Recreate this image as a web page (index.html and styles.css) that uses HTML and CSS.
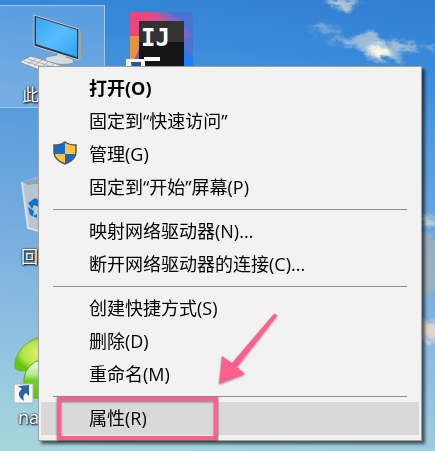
FILE: index.html
```html
<!DOCTYPE html>
<html lang="zh-CN">
<head>
<meta charset="utf-8">
<meta name="viewport" content="width=device-width, initial-scale=1">
<title>桌面</title>
<link rel="stylesheet" href="styles.css">
</head>
<body>
<main class="desktop">
  <svg class="sky" viewBox="0 0 435 451" preserveAspectRatio="none" aria-hidden="true">
    <defs>
      <filter id="cloud" x="-20%" y="-20%" width="140%" height="140%">
        <feGaussianBlur stdDeviation="2" result="soft"/>
        <feTurbulence type="fractalNoise" baseFrequency="0.09 0.16" numOctaves="4" seed="8" result="n"/>
        <feDisplacementMap in="soft" in2="n" scale="14" xChannelSelector="R" yChannelSelector="G"/>
        <feGaussianBlur stdDeviation="0.6"/>
      </filter>
    </defs>
    <g filter="url(#cloud)" fill="#c8d3d8">
      <path d="M325 0L343 11L350 5L362 1L370 9L361 0Z" opacity=".9"/>
      <path d="M308 29L325 20L330 28L343 31L336 35L320 32Z" opacity=".45"/>
      <path d="M325 41L350 38L371 32L386 42L412 44L420 51L397 51L404 66L388 58L372 63L360 47L343 43Z" opacity=".7"/>
      <path d="M366 50L378 44L392 51L380 60Z" fill="#fff7e4"/>
      <path d="M424 44L436 47V52L426 50Z" opacity=".5"/>
      <path d="M416 214L440 221V228L416 222Z"/>
      <path d="M416 230L440 240V290L416 300Z" fill="#9eb2b9" opacity=".85"/>
      <path d="M416 318L440 324V334L432 344L416 336Z" fill="#e4d9d0" opacity=".9"/>
    </g>
  </svg>

  <section class="shortcut computer">
    <svg viewBox="0 0 104 75" width="104" height="75" aria-hidden="true">
      <defs><linearGradient id="screen" x2="1" y2="1"><stop stop-color="#35a5f5"/><stop offset=".5" stop-color="#58bcff"/><stop offset="1" stop-color="#2fa5f8"/></linearGradient></defs>
      <path d="M58 45L66 47L66 51Q76 53 73 57Q66 60 50 57Q43 55 46 51L57 49Z" fill="#d3dbdf" stroke="#87939c"/>
      <path d="M34 9L79 23V54L34 40Z" fill="#333b42" stroke="#c1c9ce"/>
      <path d="M36 11L77 24V51L36 38Z" fill="url(#screen)"/>
      <path d="M79 24L81 25V53L78 54Z" fill="#9ca5aa"/>
      <path d="M19 56L31 50L66 61L55 70Z" fill="#e5e8e9" stroke="#8d979e"/>
      <path d="M24 55L59 66M28 53L62 64M28 58L36 53M34 60L42 54M40 62L48 56M46 64L54 58" stroke="#a9b1b6" fill="none"/>
    </svg>
    <span>此</span>
  </section>

  <section class="shortcut ide">
    <svg viewBox="0 0 68 64" width="68" height="64">
      <path d="M4 0H67V64H4Z" fill="#4d73d2"/>
      <path d="M4 0H34L45 15L13 34L4 28Z" fill="#e9467c"/>
      <path d="M25 0H35L45 9L29 11Z" fill="#cd528f"/>
      <path d="M31 0H41L55 9H42Z" fill="#8c66bd"/>
      <path d="M4 24H13V40L9 50H4Z" fill="#e3943d"/>
      <path d="M7 50L13 37V64H4Z" fill="#92609c"/>
      <path d="M56 14L67 23L58 28Z" fill="#7667ca"/>
      <path d="M57 38L67 47V64H57Z" fill="#1b80f2"/>
      <path d="M13 9H58V64H13Z" fill="#151515"/>
      <path d="M13 9H58V30H13Z" fill="#333"/>
      <text class="ide-letters" x="15" y="34">IJ</text>
      <path d="M18 45H34V49H18Z" fill="#fff"/>
      <path d="M0 47H19V64H0Z" fill="#f4f6f8"/>
      <path d="M5 50H15V60L11 57L6 61Z" fill="#255897"/>
    </svg>
  </section>

  <section class="shortcut bin">
    <svg viewBox="0 0 60 60" width="60" height="60" aria-hidden="true">
      <path d="M1 7L28 0H52L49 55L28 58L7 53Z" fill="#b6c8d5"/>
      <path d="M1 7L20 1V53L7 53Z" fill="#b8c6cf"/>
      <path d="M1 7L28 0V7L7 10Z" fill="#8aa5b8"/>
      <path d="M1 7L7 53L28 59" stroke="#d6e0e5" fill="none" stroke-width="2"/>
      <path d="M7 28L14 23L21 27L18 32L13 30L11 34ZM7 32L13 36L12 41L16 39V43L9 40ZM18 36L25 34V41L17 42Z" fill="#1673cb"/>
    </svg>
    <span>回</span>
  </section>

  <section class="shortcut green">
    <svg viewBox="0 0 60 70" width="60" height="70" aria-hidden="true">
      <defs><radialGradient id="leaf"><stop stop-color="#e9f17a"/><stop offset=".7" stop-color="#b8e548"/><stop offset="1" stop-color="#63c414"/></radialGradient><linearGradient id="leaf2" x2="0" y2="1"><stop stop-color="#fff"/><stop offset=".4" stop-color="#b4e68f"/><stop offset=".55" stop-color="#6fd31c"/><stop offset="1" stop-color="#62c600"/></linearGradient></defs>
      <path d="M1 33C-1 18 14 4 29 1L55 2V35L8 36Q3 36 1 33Z" fill="url(#leaf)" stroke="#68bd12"/>
      <path d="M10 63V43Q12 29 28 24H55V63Z" fill="url(#leaf2)" stroke="#51ad10"/>
      <path d="M0 49H19V68H0Z" fill="#f5f7f8" stroke="#a7b4b8"/>
      <path d="M4 51L15 50V61L12 58Q8 60 10 66Q4 62 5 58Q6 55 8 54Z" fill="#2b64a6"/>
    </svg>
    <span>na</span>
  </section>

  <nav class="context-menu" aria-label="快捷菜单">
    <button class="default">打开(O)</button>
    <button>固定到“快速访问”</button>
    <button>
      <svg class="shield" viewBox="0 0 24 24" width="24" height="24" aria-hidden="true">
        <path d="M12 1Q8 4 1 4V11Q1 19 12 23Z" fill="#1469c9"/>
        <path d="M12 1Q16 4 23 4V11Q23 19 12 23Z" fill="#ffc23e"/>
        <path d="M1 13H12V23Q4 20 1 13Z" fill="#ffc23e"/>
        <path d="M12 13H23Q20 20 12 23Z" fill="#1469c9"/>
        <path d="M12 1Q16 4 23 4V11Q23 19 12 23Q1 19 1 11V4Q8 4 12 1Z" fill="none" stroke="#505760" stroke-width="1.5"/>
      </svg>
      管理(G)</button>
    <button>固定到“开始”屏幕(P)</button>
    <hr>
    <button>映射网络驱动器(N)...</button>
    <button>断开网络驱动器的连接(C)...</button>
    <hr>
    <button>创建快捷方式(S)</button>
    <button>删除(D)</button>
    <button>重命名(M)</button>
    <hr>
    <button class="selected">属性(R)</button>
    <span class="marker"></span>
    <svg class="arrow" viewBox="0 0 62 80" width="62" height="80" aria-hidden="true">
      <path d="M57 4Q59 1 61 5L21 56L29 63L3 73L6 45L16 52Z" fill="#ff6090"/>
    </svg>
  </nav>
</main>
</body>
</html>
```

FILE: styles.css
```css
* {
  box-sizing: border-box;
}

body {
  margin: 0;
  font-family: "Open Sans", "Noto Sans CJK SC", sans-serif;
}

.desktop {
  position: relative;
  min-height: 100vh;
  overflow: hidden;
  background: linear-gradient(187deg, #327ed0 0%, #388bda 14%, #5499dc 28%, #7aafe0 58%, #91c1e1 78%, #a9d7dc 100%);
}

.sky {
  position: absolute;
  inset: 0;
  width: 100%;
  height: 100%;
}

/* Desktop shortcuts on the free canvas */
.shortcut {
  position: absolute;
  color: #fff;
  font-size: 17px;
  line-height: 24px;
  text-shadow: 1px 1px 2px #000, 0 0 2px #000;
}

.shortcut svg {
  display: block;
}

.computer {
  left: 0;
  top: 5px;
  width: 105px;
  height: 103px;
  background: #ffffff30;
  border: 1px solid #9dc7ec;
  border-left: 0;
}

.computer span {
  display: block;
  padding: 2px 22px;
}

.ide {
  left: 126px;
  top: 12px;
}

.ide-letters {
  fill: #fff;
  font-family: "DejaVu Sans Mono", monospace;
  font-size: 24px;
  font-weight: 700;
  text-shadow: none;
}

.bin {
  left: 21px;
  top: 175px;
}

.bin span {
  display: block;
  padding-top: 10px;
}

.green {
  left: 14px;
  top: 335px;
}

.green span {
  display: block;
  padding: 0 4px;
  font-size: 18px;
}

/* Context menu */
.context-menu {
  position: absolute;
  top: 66px;
  left: 38px;
  right: 13px;
  display: flex;
  flex-direction: column;
  padding: 5px 2px;
  background: #f2f2f2;
  border: 1px solid #a0a0a0;
  box-shadow: 3px 3px 3px #0009;
}

.context-menu button {
  position: relative;
  height: 33px;
  padding: 0 48px 2px;
  border: 0;
  background: none;
  color: #000;
  font: inherit;
  font-size: 18px;
  line-height: 30px;
  text-align: left;
  white-space: nowrap;
}

.context-menu .default {
  font-weight: 700;
}

.context-menu button:hover,
.context-menu .selected {
  background: #d9d9d9;
}

.context-menu hr {
  align-self: stretch;
  height: 1px;
  margin: 5px 12px;
  border: 0;
  background: #919191;
}

.shield {
  position: absolute;
  left: 12px;
  top: 3px;
}

/* Annotations over the menu */
.marker {
  position: absolute;
  left: 18px;
  bottom: 0;
  width: 161px;
  height: 43px;
  border: 4px solid #ff6090;
  filter: drop-shadow(0 1px 1px #0008);
}

.arrow {
  position: absolute;
  left: 177px;
  bottom: 49px;
  filter: drop-shadow(0 1px 1px #0006);
}
```
